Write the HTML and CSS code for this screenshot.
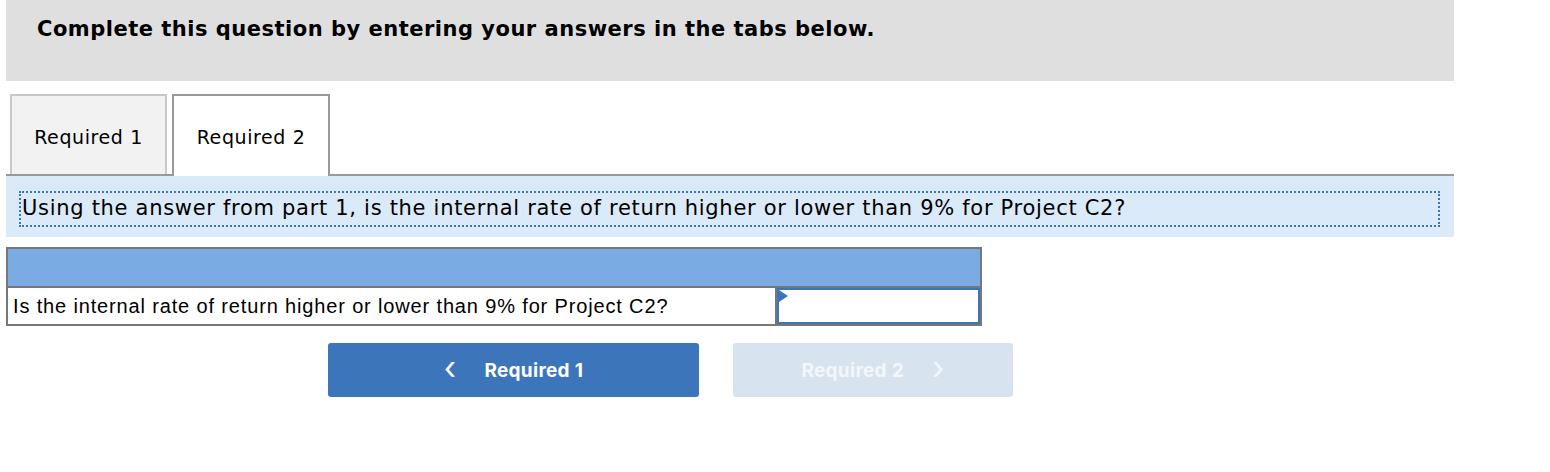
FILE: index.html
```html
<!DOCTYPE html>
<html lang="en">

<head>
    <meta charset="UTF-8">
    <title>Required 2</title>
    <link rel="stylesheet" href="styles.css">
</head>

<body>
    <div class="page">
        <div class="banner">
            <h2>Complete this question by entering your answers in the tabs below.</h2>
        </div>
        <div class="tabs">
            <div class="tab">Required 1</div>
            <div class="tab active">Required 2</div>
        </div>
        <div class="prompt">
            <p>Using the answer from part 1, is the internal rate of return higher or lower than 9% for Project C2?</p>
        </div>
        <div class="answer">
            <div class="answer-head"></div>
            <div class="answer-row">
                <div class="label">Is the internal rate of return higher or lower than 9% for Project C2?</div>
                <div class="field"><div class="input"></div></div>
            </div>
        </div>
        <div class="nav">
            <button class="nav-btn prev"><span class="chev">&lsaquo;</span> Required 1</button>
            <button class="nav-btn next" disabled>Required 2 <span class="chev">&rsaquo;</span></button>
        </div>
    </div>
</body>

</html>
```

FILE: styles.css
```css
body {
    margin: 0;
    background: #fff;
    color: #000;
}

.page {
    width: 1448px;
    margin-left: 6px;
}

.banner {
    background: #dfdfdf;
    height: 81px;
    padding: 15px 0 0 31px;
    box-sizing: border-box;
}

.banner h2 {
    margin: 0;
    font-family: "DejaVu Sans", Verdana, sans-serif;
    font-weight: bold;
    font-size: 21px;
    letter-spacing: 0.5px;
    line-height: 28px;
}

.tabs {
    display: flex;
    gap: 5px;
    padding: 13px 0 0 4px;
    border-bottom: 2px solid #999;
    height: 80px;
}

.tab {
    width: 157px;
    height: 80px;
    border: 2px solid #c8c8c8;
    border-bottom: none;
    background: #f2f2f2;
    display: flex;
    align-items: center;
    justify-content: center;
    font-family: "DejaVu Sans", Verdana, sans-serif;
    font-size: 19px;
    letter-spacing: 0.6px;
    padding-top: 4px;
    box-sizing: border-box;
}

.tab.active {
    width: 158px;
    height: 82px;
    border-color: #999;
    background: #fff;
    padding-bottom: 2px;
    position: relative;
    z-index: 1;
}

.prompt {
    background: #daeaf8;
    height: 61px;
    padding: 15px 14px 0 13px;
    box-sizing: border-box;
}

.prompt p {
    margin: 0;
    border: 2px dotted #3c75bc;
    height: 36px;
    font-family: "DejaVu Sans", Verdana, sans-serif;
    font-size: 21px;
    letter-spacing: 0.7px;
    line-height: 31px;
    padding-left: 1px;
    box-sizing: border-box;
}

.answer {
    margin-top: 10px;
    width: 976px;
    border: 2px solid #777;
    box-sizing: border-box;
    font-family: "Liberation Sans", Arial, sans-serif;
}

.answer-head {
    background: #7aabe2;
    height: 37px;
    border-bottom: 2px solid #777;
}

.answer-row {
    display: grid;
    grid-template-columns: 769px 1fr;
    height: 36px;
}

.label {
    border-right: 2px solid #777;
    font-size: 20px;
    letter-spacing: 0.85px;
    line-height: 36px;
    padding-left: 5px;
}

.field {
    position: relative;
}

.input {
    height: 100%;
    border: 2px solid #3c75bc;
    box-sizing: border-box;
}

.field::before {
    content: "";
    position: absolute;
    left: 2px;
    top: 2px;
    border-left: 9px solid #3c75bc;
    border-top: 6px solid transparent;
    border-bottom: 6px solid transparent;
}

.nav {
    display: flex;
    gap: 34px;
    padding: 17px 0 0 322px;
}

.nav-btn {
    height: 54px;
    border: none;
    border-radius: 3px;
    color: #fff;
    font-family: Inter, Roboto, sans-serif;
    font-weight: bold;
    font-size: 19px;
    letter-spacing: 0.3px;
    display: flex;
    align-items: center;
    justify-content: center;
    gap: 28px;
}

.nav-btn.prev {
    width: 371px;
    background: #3d75bb;
}

.nav-btn.next {
    width: 280px;
    background: #d8e3f0;
    color: #f3f6fa;
}

.chev {
    font-weight: normal;
    font-size: 32px;
    line-height: 1;
    margin-top: -5px;
}
```
